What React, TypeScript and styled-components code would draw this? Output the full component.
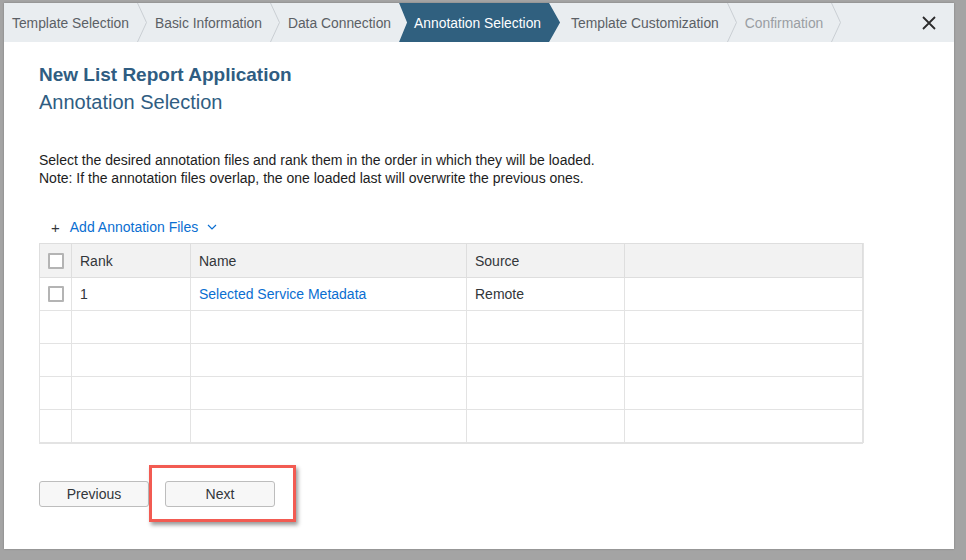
import React from "react";
import styled, { createGlobalStyle } from "styled-components";

const Global = createGlobalStyle`
  html, body { margin: 0; padding: 0; }
  body {
    background: #a4a4a4;
    font-family: "Liberation Sans", Arial, sans-serif;
    width: 966px;
    height: 560px;
    overflow: hidden;
  }
`;

const Page = styled.div`
  padding: 3px 0 0 4px;
`;

const Dialog = styled.div`
  width: 950px;
  height: 546px;
  background: #ffffff;
  display: flex;
  flex-direction: column;
  box-shadow: 0 0 2px rgba(0, 0, 0, 0.25);
`;

const Header = styled.div`
  height: 39px;
  background: #e9edf0;
  display: flex;
  align-items: stretch;
`;

const Steps = styled.div`
  display: flex;
  align-items: stretch;
  flex: 1;
`;

type StepState = "done" | "active" | "todo";

const Step = styled.div<{ $state: StepState; $first?: boolean; $afterActive?: boolean }>`
  display: flex;
  align-items: center;
  font-size: 13.85px;
  white-space: nowrap;
  color: ${(p) => (p.$state === "todo" ? "#9a9ea3" : p.$state === "active" ? "#ffffff" : "#5b6065")};
  padding: ${(p) =>
    p.$state === "active"
      ? "0 19px 0 15px"
      : p.$first
      ? "0 8px 0 8px"
      : p.$afterActive
      ? "0 8px 0 11px"
      : "0 8px"};
  background: ${(p) => (p.$state === "active" ? "#30607f" : "transparent")};
  clip-path: ${(p) =>
    p.$state === "active"
      ? "polygon(0 0, calc(100% - 11px) 0, 100% 50%, calc(100% - 11px) 100%, 0 100%, 8px 50%)"
      : "none"};
`;

const Sep = styled.svg`
  width: 10px;
  height: 39px;
  flex: none;
`;

const Separator = () => (
  <Sep viewBox="0 0 10 39">
    <polyline points="0.5,0 9.5,19.5 0.5,39" fill="none" stroke="#c9ced3" strokeWidth="1" />
  </Sep>
);

const CloseButton = styled.button`
  width: 50px;
  border: none;
  background: transparent;
  display: flex;
  align-items: center;
  justify-content: center;
  padding: 0;
  cursor: pointer;
`;

const Body = styled.div`
  flex: 1;
  padding: 21px 0 0 35px;
  display: flex;
  flex-direction: column;
`;

const Title = styled.h1`
  margin: 0;
  font-size: 19px;
  line-height: 24px;
  font-weight: 700;
  color: #2f5d82;
`;

const Subtitle = styled.h2`
  margin: 2px 0 0;
  font-size: 20px;
  line-height: 26px;
  font-weight: 400;
  color: #2f5d82;
`;

const Intro = styled.p`
  margin: 36px 0 0;
  font-size: 14px;
  line-height: 18px;
  color: #1d1d1d;
`;

const AddRow = styled.div`
  margin-top: 31px;
  height: 18px;
  display: flex;
  align-items: center;
  padding-left: 12px;
  font-size: 14px;
  color: #0a6ed1;
`;

const Plus = styled.span`
  color: #32363a;
  font-size: 15px;
  margin-right: 10px;
`;

const Chevron = styled.svg`
  width: 10px;
  height: 10px;
  margin-left: 9px;
`;

const Table = styled.table`
  margin-top: 7px;
  width: 823px;
  border-collapse: collapse;
  table-layout: fixed;
  border: 1px solid #d6d6d6;
  box-shadow: 0 1px 0 #e3e3e3, 1px 0 0 #e3e3e3;
  font-size: 14px;
  color: #32363a;
`;

const Th = styled.th`
  height: 33px;
  background: #f2f2f2;
  border: 1px solid #dedede;
  text-align: left;
  font-weight: 400;
  padding: 0 8px;
  color: #32363a;
`;

const Td = styled.td`
  height: 32px;
  border: 1px solid #e3e3e3;
  padding: 0 8px;
`;

const Link = styled.span`
  color: #0a6ed1;
`;

const Check = styled.span`
  display: block;
  width: 12px;
  height: 12px;
  border: 2px solid #b4b4b4;
  background: #fff;
  border-radius: 1px;
`;

const Buttons = styled.div`
  margin-top: 22px;
  display: flex;
  align-items: flex-start;
`;

const Button = styled.button`
  width: 110px;
  height: 26px;
  background: #f7f7f7;
  border: 1px solid #bdbdbd;
  border-radius: 3px;
  font-family: "Liberation Sans", Arial, sans-serif;
  font-size: 14px;
  color: #32363a;
  padding: 0;
  margin-top: 16px;
`;

const Highlight = styled.div`
  border: 3px solid #f25b52;
  padding: 13px 18px 12px 13px;
  box-shadow: 2px 3px 4px rgba(0, 0, 0, 0.4);
  & > button { margin-top: 0; }
`;

const steps: { label: string; state: StepState }[] = [
  { label: "Template Selection", state: "done" },
  { label: "Basic Information", state: "done" },
  { label: "Data Connection", state: "done" },
  { label: "Annotation Selection", state: "active" },
  { label: "Template Customization", state: "done" },
  { label: "Confirmation", state: "todo" },
];

const colWidths = [32, 119, 276, 158, 238];

export default function App() {
  return (
    <>
      <Global />
      <Page>
        <Dialog>
          <Header>
            <Steps>
              {steps.map((s, i) => {
                const next = steps[i + 1];
                const prev = steps[i - 1];
                const showSep = s.state !== "active" && (!next || next.state !== "active");
                return (
                  <React.Fragment key={s.label}>
                    <Step
                      $state={s.state}
                      $first={i === 0}
                      $afterActive={!!prev && prev.state === "active"}
                    >
                      {s.label}
                    </Step>
                    {showSep && <Separator />}
                  </React.Fragment>
                );
              })}
            </Steps>
            <CloseButton aria-label="Close">
              <svg width="16" height="16" viewBox="0 0 16 16">
                <path d="M2 2 L14 14 M14 2 L2 14" stroke="#2b2b2b" strokeWidth="1.8" fill="none" />
              </svg>
            </CloseButton>
          </Header>
          <Body>
            <Title>New List Report Application</Title>
            <Subtitle>Annotation Selection</Subtitle>
            <Intro>
              Select the desired annotation files and rank them in the order in which they will be loaded.
              <br />
              Note: If the annotation files overlap, the one loaded last will overwrite the previous ones.
            </Intro>
            <AddRow>
              <Plus>+</Plus>
              Add Annotation Files
              <Chevron viewBox="0 0 10 10">
                <polyline points="1,3 5,7 9,3" fill="none" stroke="#0a6ed1" strokeWidth="1.2" />
              </Chevron>
            </AddRow>
            <Table>
              <colgroup>
                {colWidths.map((w, i) => (
                  <col key={i} style={{ width: w }} />
                ))}
              </colgroup>
              <thead>
                <tr>
                  <Th><Check /></Th>
                  <Th>Rank</Th>
                  <Th>Name</Th>
                  <Th>Source</Th>
                  <Th />
                </tr>
              </thead>
              <tbody>
                <tr>
                  <Td><Check /></Td>
                  <Td>1</Td>
                  <Td><Link>Selected Service Metadata</Link></Td>
                  <Td>Remote</Td>
                  <Td />
                </tr>
                {[0, 1, 2, 3].map((r) => (
                  <tr key={r}>
                    <Td /><Td /><Td /><Td /><Td />
                  </tr>
                ))}
              </tbody>
            </Table>
            <Buttons>
              <Button>Previous</Button>
              <Highlight>
                <Button>Next</Button>
              </Highlight>
            </Buttons>
          </Body>
        </Dialog>
      </Page>
    </>
  );
}
